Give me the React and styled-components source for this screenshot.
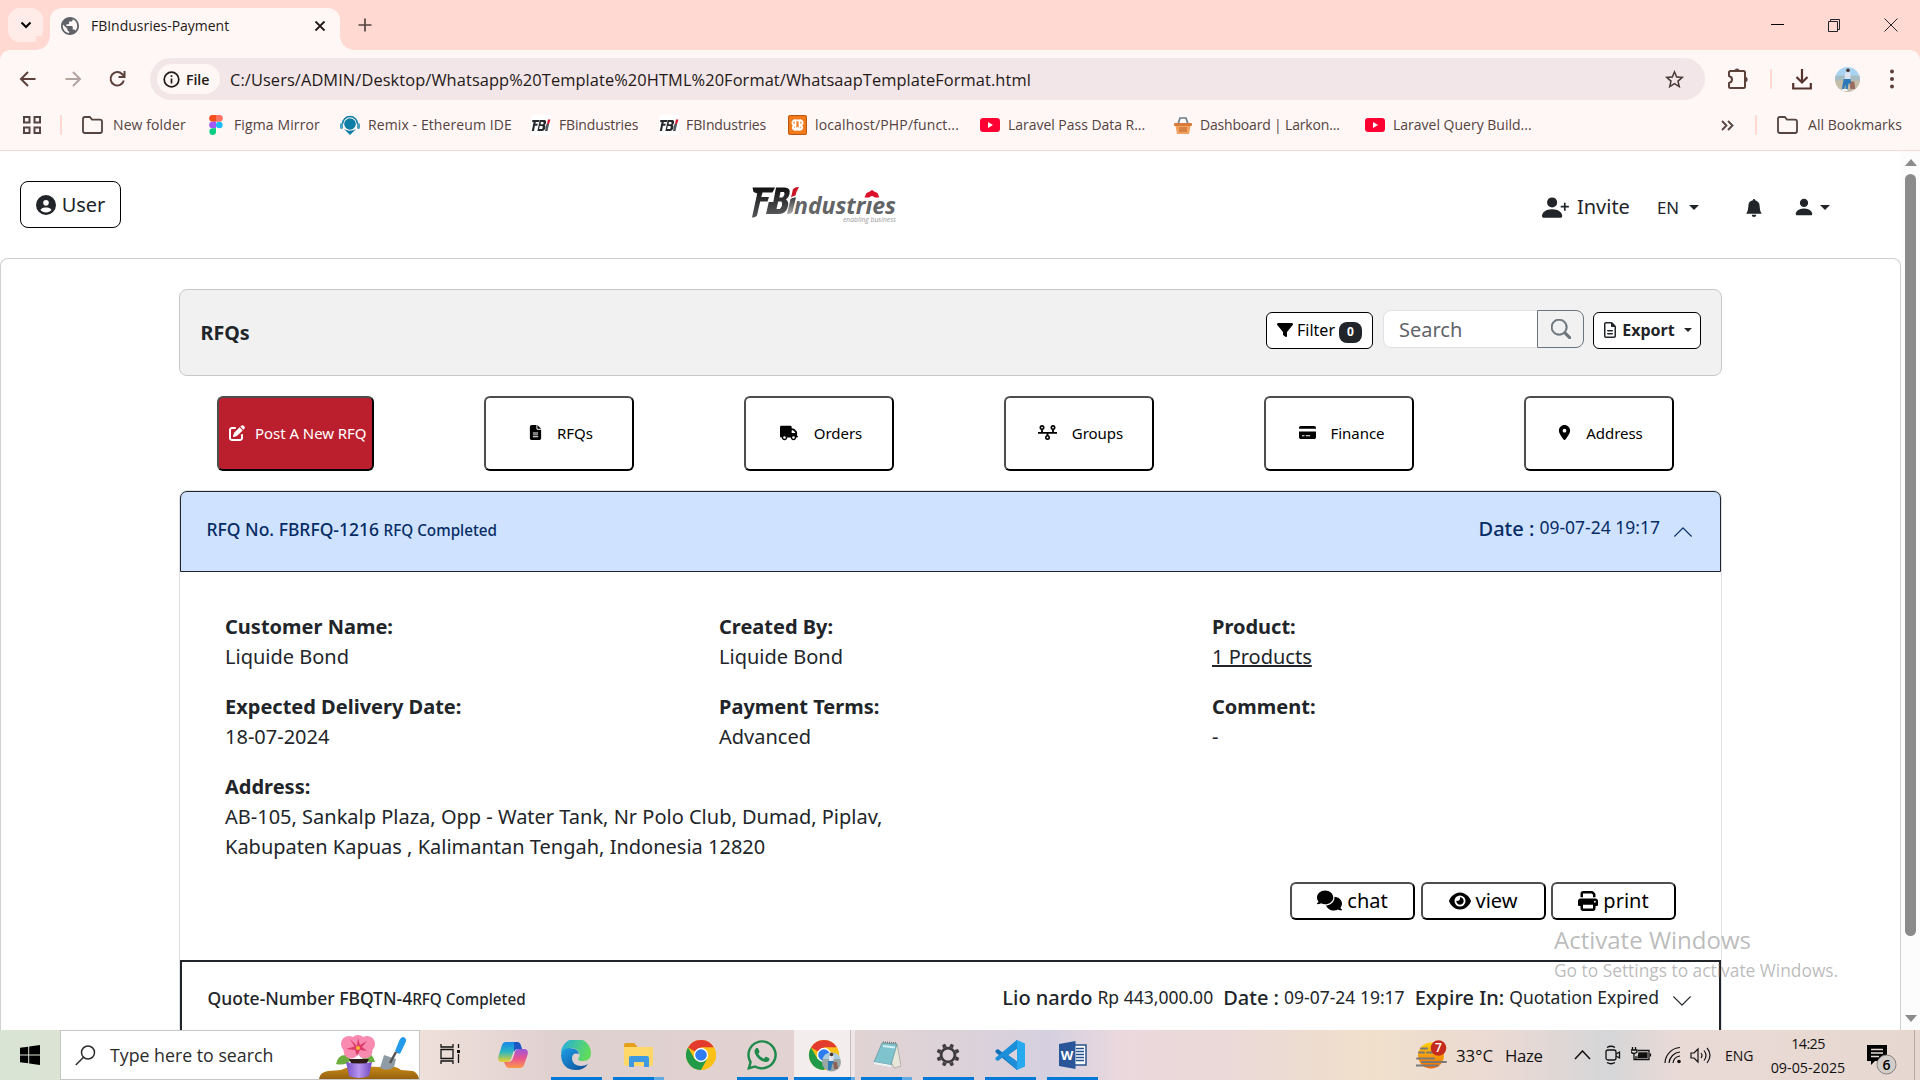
import React from "react";
import styled, { createGlobalStyle } from "styled-components";
import {
  FaCircleUser, FaPenToSquare, FaFileLines, FaTruck, FaCreditCard, FaLocationDot,
  FaFilter, FaComments, FaEye, FaPrint, FaRegFileLines, FaWhatsapp,
} from "react-icons/fa6";
import { BsPersonPlusFill, BsPersonFill, BsBellFill, BsSearch, BsChevronUp, BsChevronDown } from "react-icons/bs";
import { MdPublic, MdStarBorder } from "react-icons/md";

const GlobalStyle = createGlobalStyle`
  *, *::before, *::after { box-sizing: border-box; }
  html, body { margin: 0; padding: 0; overflow: hidden; }
  body { font-family: "Noto Sans", "Open Sans", sans-serif; color: #212529; background: #fff; }
  button, input { font-family: inherit; margin: 0; }
  svg { display: block; flex: none; }
`;

const Desktop = styled.div`
  width: 1920px;
  height: 1080px;
  display: flex;
  flex-direction: column;
  position: relative;
  overflow: hidden;
`;

/* ---------- browser chrome ---------- */
const Chrome = styled.header`
  font-family: "Open Sans", "Noto Sans", sans-serif;
  height: 151px;
  flex: none;
  background: #fff7f5;
  border-bottom: 1px solid #f5dbd7;
`;
const TabStrip = styled.div`
  height: 50px;
  background: #ffd9d2;
  display: flex;
  padding-left: 8px;
`;
const TabSearch = styled.button`
  width: 35px;
  height: 34px;
  margin: 8px 7px 0 0;
  padding: 0;
  border: 0;
  border-radius: 12px;
  background: #ffece8;
  display: flex;
  align-items: center;
  justify-content: center;
`;
const Tab = styled.div`
  position: relative;
  width: 290px;
  height: 42px;
  margin-top: 8px;
  padding: 0 10px 7px 11px;
  border-radius: 12px 12px 0 0;
  background: #fff7f5;
  display: flex;
  align-items: center;
  color: #241917;
  &::before, &::after {
    content: "";
    position: absolute;
    bottom: 0;
    width: 14px;
    height: 14px;
  }
  &::before { left: -14px; background: radial-gradient(circle at 0 0, #ffd9d2 13.5px, #fff7f5 14px); }
  &::after { right: -14px; background: radial-gradient(circle at 100% 0, #ffd9d2 13.5px, #fff7f5 14px); }
`;
const TabTitle = styled.span`
  flex: 1;
  margin-left: 12px;
  font-size: 14px;
  letter-spacing: -0.02px;
`;
const NewTab = styled.div`
  margin: 17px 0 0 18px;
  flex: 1;
`;
const WindowControls = styled.div`
  display: flex;
  align-items: center;
  height: 50px;
  gap: 42px;
  padding-right: 22px;
`;
const Toolbar = styled.div`
  height: 58px;
  background: #fff7f5;
  border-radius: 10px 10px 0 0;
  padding: 0 23px 0 18px;
  display: flex;
  align-items: center;
`;
const ToolbarWrap = styled.div`
  background: #ffd9d2;
`;
const NavButtons = styled.div`
  display: flex;
  gap: 25px;
  width: 132px;
`;
const Omnibox = styled.div`
  width: 1555px;
  height: 42px;
  margin-right: 22px;
  padding: 0 19px 0 7px;
  border-radius: 21px;
  background: #f2e6e8;
  display: flex;
  align-items: center;
`;
const FileChip = styled.div`
  height: 30px;
  width: 63px;
  border-radius: 15px;
  padding-left: 6px;
  background: #fff7f5;
  display: flex;
  align-items: center;
  gap: 6px;
  font-size: 14.2px;
  font-weight: 600;
  color: #241917;
  letter-spacing: -0.1px;
`;
const Url = styled.span`
  flex: 1;
  margin-left: 10px;
  font-size: 16.4px;
  letter-spacing: 0.09px;
  color: #241917;
`;
const Divider = styled.span`
  width: 2px;
  height: 20px;
  border-radius: 1px;
  background: #ffd9d2;
`;
const ToolbarActions = styled.div`
  flex: 1;
  display: flex;
  align-items: center;
`;
const ActionCell = styled.span`
  width: ${(p) => p.$w}px;
  flex: none;
`;
const Bookmarks = styled.nav`
  height: 34px;
  display: flex;
  align-items: center;
  color: #54433f;
`;
const Bookmark = styled.span`
  display: flex;
  align-items: center;
  gap: ${(p) => p.$gap ?? 9}px;
  width: ${(p) => p.$w}px;
  padding-left: ${(p) => p.$pl ?? 0}px;
  font-size: 14px;
  letter-spacing: ${(p) => p.$ls ?? 0}px;
  white-space: nowrap;
`;
const BookmarkLabel = styled.span`
  margin-bottom: 2px;
`;

/* ---------- web page ---------- */
const Viewport = styled.div`
  height: 879px;
  flex: none;
  display: flex;
  overflow: hidden;
`;
const Page = styled.div`
  width: 1901px;
  display: flex;
  flex-direction: column;
`;
const Scrollbar = styled.div`
  width: 19px;
  background: #fcfcfc;
  display: flex;
  flex-direction: column;
  align-items: center;
  padding: 8px 0 8px;
`;
const Thumb = styled.div`
  width: 11px;
  height: 762px;
  margin: 8px 0 auto;
  border-radius: 6px;
  background: #8b8b8b;
`;
const ScrollArrow = styled.div`
  width: 0;
  height: 0;
  border: 6.5px solid transparent;
  border-top-width: ${(p) => (p.$down ? 7 : 0)}px;
  border-bottom-width: ${(p) => (p.$down ? 0 : 7)}px;
  border-top-color: ${(p) => (p.$down ? "#8b8b8b" : "transparent")};
  border-bottom-color: ${(p) => (p.$down ? "transparent" : "#8b8b8b")};
`;
const SiteHeader = styled.header`
  height: 107px;
  flex: none;
  padding: 0 71px 0 20px;
  display: grid;
  grid-template-columns: 732px 1fr auto;
  align-items: start;
`;
const UserButton = styled.button`
  width: 101px;
  height: 47px;
  margin-top: 30px;
  padding: 0;
  border: 1px solid #000;
  border-radius: 8px;
  background: #fff;
  color: #212529;
  font-size: 20px;
  letter-spacing: -0.1px;
  display: flex;
  align-items: center;
  justify-content: center;
  gap: 6px;
`;
const Logo = styled.div`
  width: 150px;
  margin-top: 34px;
`;
const HeaderNav = styled.div`
  display: flex;
  align-items: center;
  height: 30px;
  margin-top: 41px;
  font-size: 20px;
`;
const Invite = styled.span`
  margin: -1px 27px 0 8px;
`;
const Lang = styled.span`
  font-size: 16.8px;
  margin-right: 10px;
`;
const Caret = styled.i`
  width: 0;
  height: 0;
  border: ${(p) => p.$size ?? 5}px solid transparent;
  border-top-color: currentColor;
  border-bottom: 0;
`;
const MainCard = styled.main`
  flex: 1;
  min-height: 0;
  border: 1px solid #d0d0d0;
  border-bottom: 0;
  border-radius: 8px 8px 0 0;
  padding: 30px 178px 0;
  display: flex;
  flex-direction: column;
`;
const TitleBar = styled.div`
  height: 87px;
  flex: none;
  border: 1px solid #c8c8c8;
  border-radius: 8px;
  background: #f1f1f1;
  padding: 20px 20px 0 20.5px;
  display: flex;
  justify-content: space-between;
  align-items: flex-start;
`;
const Title = styled.h1`
  margin: 8px 0 0;
  font-size: 19.7px;
  line-height: 30px;
  font-weight: 700;
`;
const Tools = styled.div`
  display: flex;
  align-items: flex-start;
`;
const ToolButton = styled.button`
  height: 37px;
  width: ${(p) => p.$w}px;
  margin-top: 2px;
  padding: 0 0 2px;
  border: 1px solid #000;
  border-radius: 6px;
  background: #fff;
  color: ${(p) => (p.$bold ? "#212529" : "#000")};
  font-size: 16px;
  font-weight: ${(p) => (p.$bold ? 700 : 400)};
  display: flex;
  align-items: center;
  justify-content: center;
  gap: 4px;
`;
const Badge = styled.span`
  width: 23px;
  height: 21px;
  margin-top: 5px;
  border-radius: 8px;
  background: #212529;
  color: #fff;
  font-size: 12px;
  line-height: 20px;
  font-weight: 700;
  text-align: center;
`;
const SearchGroup = styled.div`
  display: flex;
  margin: 0 9px 0 10px;
  height: 38px;
`;
const SearchInput = styled.input`
  width: 154px;
  height: 38px;
  padding: 0 15px;
  border: 1px solid #dee2e6;
  border-right: 0;
  border-radius: 8px 0 0 8px;
  font-size: 20px;
  outline: 0;
  &::placeholder { color: #5f6469; opacity: 1; }
`;
const SearchButton = styled.button`
  width: 47px;
  height: 38px;
  padding: 0;
  border: 1px solid #6c757d;
  border-radius: 0 8px 8px 0;
  background: #f1f1f1;
  color: #6c757d;
  display: flex;
  align-items: center;
  justify-content: center;
`;
const Steps = styled.nav`
  display: flex;
  gap: 110px;
  flex: none;
  margin: 20px 0 19px 38px;
`;
const outset = (w) => `
  border: ${w}px solid;
  border-color: #4d4d4d #000 #000 #4d4d4d;
`;
const Step = styled.button`
  width: ${(p) => (p.$primary ? 157 : 150)}px;
  height: 75px;
  flex: none;
  padding: 0 0 2px ${(p) => p.$pad ?? 0}px;
  ${outset(2)}
  border-radius: 6px;
  background: ${(p) => (p.$primary ? "#bb1f2e" : "#fff")};
  color: ${(p) => (p.$primary ? "#fff" : "#000")};
  font-size: 15px;
  letter-spacing: -0.05px;
  white-space: nowrap;
  display: flex;
  align-items: center;
  justify-content: ${(p) => (p.$primary ? "flex-start" : "center")};
  gap: ${(p) => p.$gap}px;
`;
const Accordion = styled.section`
  flex: 1;
  min-height: 0;
  border: 1px solid #dee2e6;
  border-bottom: 0;
  border-radius: 8px 8px 0 0;
  display: flex;
  flex-direction: column;
`;
const AccordionHeader = styled.div`
  height: 81px;
  flex: none;
  border: 1px solid #212529;
  border-radius: 7px 7px 0 0;
  background: #cfe2ff;
  color: #052c65;
  padding: 0 26px 5px 25.5px;
  display: flex;
  align-items: center;
  font-size: 17.5px;
`;
const QuoteHeader = styled.div`
  height: 90px;
  flex: none;
  border: 2px solid #212529;
  border-bottom: 0;
  padding: 21px 26px 0 25.5px;
  display: flex;
  align-items: flex-start;
  line-height: 30px;
  font-size: 17.5px;
`;
const HeadLeft = styled.span`
  flex: 1;
  font-weight: 500;
`;
const SmallState = styled.span`
  font-size: 15.25px;
`;
const Strong = styled.span`
  font-size: 20px;
  font-weight: 500;
  margin-top: ${(p) => p.$mt ?? 0}px;
`;
const Value = styled.span`
  margin: ${(p) => p.$mt ?? -3}px ${(p) => p.$mr ?? 0}px 0 5px;
`;
const AccordionBody = styled.div`
  height: 388px;
  flex: none;
  padding: 40px 45px 0;
`;
const Fields = styled.div`
  display: grid;
  grid-template-columns: 494px 493px 1fr;
  row-gap: 20px;
  font-size: 20px;
  line-height: 30px;
`;
const Field = styled.div`
  grid-column: ${(p) => (p.$wide ? "span 2" : "auto")};
  max-width: ${(p) => (p.$wide ? "700px" : "none")};
`;
const Label = styled.div`
  font-weight: 700;
`;
const ProductLink = styled.a`
  text-decoration: underline;
  color: inherit;
`;
const Actions = styled.div`
  display: flex;
  justify-content: flex-end;
  gap: 5.5px;
  margin-top: 20px;
`;
const ActionButton = styled.button`
  width: 125px;
  height: 38px;
  padding: 0 0 1px;
  ${outset(2)}
  border-radius: 6px;
  background: #fff;
  color: #000;
  font-size: 20px;
  display: flex;
  align-items: center;
  justify-content: center;
  gap: 5px;
`;
const Watermark = styled.div`
  position: absolute;
  left: 1554px;
  top: 923px;
  color: rgba(130, 130, 130, 0.55);
  font-family: "Open Sans", sans-serif;
  white-space: nowrap;
`;
const WatermarkTitle = styled.div`
  font-size: 24px;
  line-height: 34px;
`;
const WatermarkText = styled.div`
  font-size: 17.35px;
  line-height: 27px;
`;

/* ---------- taskbar ---------- */
const Taskbar = styled.footer`
  height: 50px;
  flex: none;
  display: flex;
  font-family: "Open Sans", "Noto Sans", sans-serif;
  color: #111;
  background: linear-gradient(90deg, #d8e4d4 0px, #dce4d4 60px, #efe0da 420px, #dfd0d0 560px, #e2d3d2 820px, #dcd2d8 960px, #d5d0e0 1050px, #ead8dd 1120px, #ead9d7 1230px, #f0e0cb 1370px, #e9d9d4 1510px, #d5d6d8 1610px, #eadad6 1680px, #e6d8d0 1920px);
`;
const StartButton = styled.div`
  width: 60px;
  display: flex;
  align-items: center;
  justify-content: center;
`;
const TaskSearch = styled.div`
  width: 360px;
  background: #fff;
  border: 1px solid #c6c6c6;
  display: flex;
  align-items: center;
  padding-left: 14px;
  font-size: 17.75px;
  color: #2b2b2b;
`;
const TaskSearchText = styled.span`
  flex: 1;
  margin-left: 14px;
`;
const Apps = styled.div`
  display: flex;
  flex: 1;
`;
const AppSlot = styled.div`
  width: ${(p) => p.$w ?? 62}px;
  height: 50px;
  display: flex;
  flex-direction: column;
  align-items: center;
`;
const AppFace = styled.div`
  height: 47px;
  width: ${(p) => (p.$active ? 61 : 51)}px;
  padding-top: ${(p) => (p.$flat ? 0 : 3)}px;
  display: flex;
  align-items: center;
  justify-content: center;
  background: ${(p) => (p.$active ? "linear-gradient(90deg, rgba(255,255,255,0.6) 56px, #c9bcbc 56px, #c9bcbc 57px, rgba(255,255,255,0.45) 57px)" : "transparent")};
`;
const Underline = styled.div`
  height: 3px;
  width: ${(p) => p.$w ?? 51}px;
  background: ${(p) => (p.$split ? `linear-gradient(90deg, #0078d7 ${p.$split}px, #62aae4 ${p.$split}px)` : "#0078d7")};
`;
const Weather = styled.div`
  display: flex;
  align-items: center;
  font-size: 16.8px;
  width: 158px;
`;
const Temp = styled.span`
  margin: 0 12px 0 9px;
`;
const Haze = styled.span`
  letter-spacing: -0.3px;
`;
const Tray = styled.div`
  display: flex;
  align-items: center;
  width: 180px;
  font-size: 14px;
  padding-left: 0;
`;
const TrayIcon = styled.span`
  width: ${(p) => p.$w}px;
`;
const Clock = styled.div`
  width: 108px;
  display: flex;
  flex-direction: column;
  align-items: center;
  padding-top: 2px;
  font-size: 14.3px;
  line-height: 23.5px;
`;
const ClockTime = styled.span`
  letter-spacing: -0.6px;
`;
const Notifications = styled.div`
  width: 53px;
  margin-right: 5px;
  padding: 13px 0 0 4px;
  border-right: 1px solid #b9aaa5;
`;

/* ---------- drawings ---------- */
const line = { fill: "none", stroke: "currentColor" };
const FolderIcon = () => (
  <svg width="21" height="18" viewBox="0 0 21 18" {...line} strokeWidth="1.8" color="#54433f">
    <path d="M1 3.2Q1 1 3 1h4.8l2.2 2.6H18q2 0 2 2V15q0 2-2 2H3q-2 0-2-2z" />
  </svg>
);
const FbMark = () => (
  <svg width="20" height="20" viewBox="0 0 20 20">
    <rect width="20" height="20" fill="#fff" />
    <g fill="#26282b"><path d="M1.500 5h7l-.7 2H4.800l-.4 1.800h2.400l-.6 2H3.900L3 16H.8L2.600 7H1z" />
      <path fillRule="evenodd" d="M8.700 5H14q1.800.8 1 3-.4 1.500-1.300 2 1.300 1 .6 3-.8 3-3.500 3H6.400zM10 7l-.5 2.200h2.500q1.300-1 .2-2.200zm-1.200 4-.7 3h3q1.200-1.500.2-3z" />
      <path d="M15.500 9H18l-1.500 7H14z" fill="#50545a" /></g>
    <path d="M17 4.500h2.500L18 9h-2z" fill="#d3172e" />
  </svg>
);
const FigmaIcon = () => (
  <svg width="14" height="20" viewBox="0 0 14 20">
    <path d="M7 0H3.500a3.300 3.300 0 0 0 0 6.700H7z" fill="#f24e1e" /><path d="M7 0h3.500a3.300 3.300 0 0 1 0 6.700H7z" fill="#ff7262" />
    <path d="M7 6.700H3.500a3.300 3.300 0 0 0 0 6.600H7z" fill="#a259ff" /><circle cx="10.300" cy="10" r="3.300" fill="#1abcfe" />
    <path d="M7 13.300H3.500A3.300 3.300 0 1 0 7 16.700z" fill="#0acf83" />
  </svg>
);
const RemixIcon = () => (
  <svg width="20" height="20" viewBox="0 0 20 20">
    <path d="M2.500 9a7.500 7.500 0 0 1 15 0" fill="none" stroke="#0f7ea6" strokeWidth="1.500" />
    <rect x="0" y="8" width="3" height="6" rx="1.500" fill="#4aa0be" /><rect x="17" y="8" width="3" height="6" rx="1.500" fill="#4aa0be" />
    <circle cx="10" cy="9" r="5.800" fill="#0f7ea6" /><path d="M4 14q6 3.500 12 0l-6 6z" fill="#0f7ea6" />
  </svg>
);
const XamppIcon = () => (
  <svg width="19" height="20" viewBox="0 0 19 20">
    <rect width="19" height="20" rx="2" fill="#f07a1c" /><rect x=".5" y=".5" width="18" height="19" rx="2" fill="none" stroke="#b8560f" />
    <path d="M7.500 10a2.400 2.400 0 1 1 0-4.600h4a2.400 2.400 0 1 1 0 4.600 2.400 2.400 0 1 1-2 3.500 2.400 2.400 0 1 1-2-3.500zM7.500 5.500v9M11.500 5.500v9" fill="none" stroke="#fff" strokeWidth="1.900" />
  </svg>
);
const YouTubeIcon = () => (
  <svg width="20" height="14" viewBox="0 0 20 14"><rect width="20" height="14" rx="3.300" fill="#f03" /><path d="M8 4l5 3-5 3z" fill="#fff" /></svg>
);
const BasketIcon = () => (
  <svg width="18" height="17" viewBox="0 0 18 17">
    <path d="M4 7l2-6h6l2 6" fill="none" stroke="#6b7f8a" strokeWidth="1.700" /><rect y="6" width="18" height="3" rx="1" fill="#d87a3c" />
    <path d="M1.500 9h15L15 17H3z" fill="#f3a15e" /><path d="M6 10v5m2-5v5m2-5v5m2-5v5" stroke="#b8622a" strokeWidth="1" />
  </svg>
);
const PuzzleIcon = () => (
  <svg width="22" height="22" viewBox="0 0 22 22" color="#5b403b">
    <path d="M2 4.500Q2 3 3.500 3h13Q18 3 18 4.500v14q0 1.500-1.500 1.500h-13Q2 20 2 18.500V15c4-1 4-6 0-7z" {...line} strokeWidth="2" strokeLinejoin="round" />
    <path d="M7.500 3a2.500 2.500 0 0 1 5 0zM18 8.800a2.600 2.600 0 0 1 0 5.200z" fill="currentColor" />
  </svg>
);
const Avatar = ({ size }) => (
  <svg width={size} height={size} viewBox="0 0 26 26">
    <defs><clipPath id={`av${size}`}><circle cx="13" cy="13" r="13" /></clipPath></defs>
    <g clipPath={`url(#av${size})`}>
      <rect width="26" height="13" fill="#a9d3f0" /><rect y="9" width="26" height="6" fill="#a8bcc4" /><rect y="14" width="26" height="12" fill="#c5bda8" />
      <path d="M15 15h5l1 8h-5z" fill="#9b6c64" /><path d="M10.500 6q3.500-2 5.500 0v7h-6z" fill="#dce4f4" />
      <circle cx="13.500" cy="3.500" r="1.900" fill="#4a3530" /><path d="M9 12.500h7l1 4-3 1-1 6.500h-2v-6l-2 6H7z" fill="#2c78b8" /><path d="M7 23h6v2H7z" fill="#f4f4f4" />
    </g>
  </svg>
);
const GroupsIcon = () => (
  <svg width="19" height="15" viewBox="0 0 19 15" {...line} strokeWidth="1.600">
    <circle cx="4" cy="2.600" r="1.700" /><circle cx="15" cy="2.600" r="1.700" />
    <path d="M4 4.500V7.500M15 4.500V7.500M0 7.800h19M9.500 8v3" strokeWidth="1.800" /><circle cx="9.500" cy="12.400" r="1.700" />
  </svg>
);
const LogoText = styled.text`
  font-family: "Open Sans", sans-serif;
  font-style: italic;
`;
const BrandLogo = () => (
  <svg width="150" height="46" viewBox="0 0 150 46">
    <defs>
      <linearGradient id="steel" x1="0" y1="0" x2="0" y2="1"><stop offset="0" stopColor="#111" /><stop offset="1" stopColor="#55575a" /></linearGradient>
      <linearGradient id="gray" x1="0" y1="0" x2="0" y2="1"><stop offset="0" stopColor="#3c3e40" /><stop offset="1" stopColor="#aaa" /></linearGradient>
    </defs>
    <path d="M.5 2.500h22.500l-2.500 5h-10l-1.200 4.500H17l-1.500 4.500H8.200L5 30.500q-2 2.500-5 2L5.200 8.500 1.500 7z" fill="url(#steel)" />
    <path fillRule="evenodd" d="M24 2.500h8.500q6.500 0 5 6.500-.8 4-3.500 5.500 3 2 2 6.500-1.800 8-9 8H14l2.800-12h4.500zm4.500 4.500-1.200 5.500h3q3.200-2.500 1.700-5.500zm-2.300 9.500-1.700 7.500h3.300q3.500-3.500 1.700-7.500z" fill="url(#steel)" />
    <path d="M38.500 14q2.500-2 5.500-1.500L40.500 27q-2 2.500-5.500 2z" fill="url(#gray)" />
    <path d="M41 4q3-2.500 6-2-3 5-3.500 8.500-2.500.3-4.500 2z" fill="#c91427" />
    <LogoText x="42" y="28.500" fontSize="24" fontWeight="700" fill="#626466" textLength="102" lengthAdjust="spacingAndGlyphs">ndustrıes</LogoText>
    <path d="M112.500 12.500l2-4.500 2.800-1.200L120 5l2.700 1.800L125.500 8l1.800 4.500-4.300 0q-3-3-6 0z" fill="#dd1029" />
    <LogoText x="91" y="36.500" fontSize="8" fill="#9a9a9a" textLength="53" lengthAdjust="spacingAndGlyphs">enabling business</LogoText>
  </svg>
);
const WindowsLogo = () => (
  <svg width="20" height="20" viewBox="0 0 20 20"><path d="M0 2.800 8.200 1.700v7.800H0zM9.200 1.500 20 0v9.500H9.200zM0 10.500h8.200v7.800L0 17.200zM9.200 10.500H20V20L9.200 18.500z" fill="#000" /></svg>
);
const FlowerArt = () => (
  <svg width="100" height="48" viewBox="0 0 100 48">
    <defs>
      <linearGradient id="pot"><stop offset="0" stopColor="#7551c8" /><stop offset=".5" stopColor="#b795f0" /><stop offset="1" stopColor="#7047bd" /></linearGradient>
      <linearGradient id="soil" x1="0" x2="0" y1="0" y2="1"><stop offset="0" stopColor="#c98b16" /><stop offset="1" stopColor="#96620f" /></linearGradient>
    </defs>
    <path d="M0 48q1-7 9-8l13-1q8-4 18-4l20 1q15-3 22 3l12 1q5 2 6 8z" fill="url(#soil)" />
    <path d="M17 33q2-10 11-9l4 5q-5 6-15 4zM56 31q-2-9-10-9l-3 5q4 5 13 4z" fill="#6cae3d" />
    <path d="M78 22l5-12" stroke="#777" strokeWidth="3" /><path d="M76 20l4.500-11q2-4 5-2.500 2.500 1.500 1 5L81 23z" fill="#249bea" />
    <path d="M65 24l12 4-2 8q-6 5-14 1z" fill="#8f9ba5" /><path d="M77 21l-6 11" stroke="#555" strokeWidth="2.500" />
    <path d="M30 28h20l-3 6H33z" fill="#2b1a17" /><path d="M27 31q13 3 26 0l-3 14q-10 4-20 0z" fill="url(#pot)" />
    <g fill="#f98ab0"><circle cx="30" cy="13" r="8" /><circle cx="39" cy="11.500" r="7.500" /><circle cx="48" cy="13" r="8" /><circle cx="46" cy="20" r="7.500" /><circle cx="32" cy="20" r="7.500" /></g>
    <path d="M38 15l-7-7 4.500 7.500L27 18l9 1 2 6 3-6 7 1-5-4 5-6-7 4-2-7z" fill="#dd3b68" /><circle cx="39" cy="17" r="2" fill="#f7b52c" />
  </svg>
);
const ChromeLogo = ({ avatar }) => (
  <svg width={avatar ? 34 : 30} height={avatar ? 34 : 30} viewBox={avatar ? "-1 -2 34 34" : "0 0 30 30"}>
    <circle cx="15" cy="15" r="15" fill="#fbc116" />
    <path d="M15 15 2 7.500A15 15 0 0 1 28 7.500H15z" fill="#e33b2e" />
    <path d="M2 7.500 8.500 18.700 15 22l6.500-3.200L15 30A15 15 0 0 1 2 7.500z" fill="#229a48" />
    <path d="M15 7.500h13A15 15 0 0 1 15 30l6.500-11.200z" fill="#fbc116" />
    <circle cx="15" cy="15" r="7.200" fill="#fff" /><circle cx="15" cy="15" r="5.800" fill="#2f7cf0" />
    {avatar && <g><circle cx="22.500" cy="22" r="9.500" fill="#9aa7a8" /><path d="M13.500 19a9.500 9.500 0 0 1 18 0z" fill="#a9cbe0" /><path d="M20 16q3-2 5 0l-1 6h-4z" fill="#e3e6ee" /><circle cx="22.500" cy="14.500" r="1.800" fill="#4a3530" /><path d="M19 21h6l-2 4-1 5h-3z" fill="#2c78b8" /><path d="M24 22h4l1 7h-4z" fill="#8f6259" /></g>}
  </svg>
);
const CopilotIcon = () => (
  <svg width="30" height="28" viewBox="0 0 30 28">
    <defs>
      <linearGradient id="cpA" x1="0" x2="0" y1="0" y2="1"><stop offset="0" stopColor="#1488ea" /><stop offset=".5" stopColor="#2fb6c0" /><stop offset="1" stopColor="#f2cf28" /></linearGradient>
      <linearGradient id="cpB" x1="0" x2="0" y1="0" y2="1"><stop offset="0" stopColor="#9b55dc" /><stop offset=".5" stopColor="#e9538f" /><stop offset="1" stopColor="#fd9a48" /></linearGradient>
    </defs>
    <path d="M8 1h11q3 0 4 4l1 3h-4q-4 0-5 4l-2 6q-1 3-4 3H4q-5 0-3.500-6L4 4q1-3 4-3z" fill="url(#cpA)" />
    <path d="M16 1h3q3 0 4 4l1 3h-4q-3 0-4 3z" fill="#1c57c4" />
    <path d="M22 27H11q-3 0-4-4l-1-2h4q4 0 5-4l2-6q1-3 4-3h5q5 0 3.500 6L26 24q-1 3-4 3z" fill="url(#cpB)" />
  </svg>
);
const EdgeIcon = () => (
  <svg width="30" height="30" viewBox="0 0 30 30">
    <defs><linearGradient id="edA" y2=".3"><stop offset="0" stopColor="#24a9e8" /><stop offset="1" stopColor="#5fdc5c" /></linearGradient>
      <linearGradient id="edB" x2="1" y2="1"><stop offset="0" stopColor="#1c9fe6" /><stop offset="1" stopColor="#0f4c96" /></linearGradient></defs>
    <path d="M0 14A15 15 0 0 1 30 13q0 8-8 8-5 0-5-2 2-2 1.500-5Q17 8 10 8 3 9 0 14z" fill="url(#edA)" />
    <path d="M0 15q1-6 8-7 9 0 10 6-7-2-7 5 1 7 9 7 4 0 7-2-4 6-12 6Q1 30 0 15z" fill="url(#edB)" />
  </svg>
);
const ExplorerIcon = () => (
  <svg width="29" height="24" viewBox="0 0 29 24">
    <path d="M0 2q0-2 2-2h8l3 3v4H0z" fill="#e2a01c" /><path d="M0 4h29v17q0 2-2 2H2q-2 0-2-2z" fill="#ffd869" />
    <path d="M5 24v-9q0-2 2-2h16q2 0 2 2v9h-5v-5H10v5z" fill="#3d9ae0" />
  </svg>
);
const NotepadIcon = () => (
  <svg width="28" height="28" viewBox="0 0 28 28">
    <path d="M9 2l15 1 4 22-7 2z" fill="#e9e7dc" stroke="#8f938c" strokeWidth=".6" /><path d="M9 2l15 1-6 21-17-3z" fill="#7fc3cf" stroke="#5e8f98" strokeWidth=".7" />
    <path d="M1 21l17 3v2L1 23z" fill="#eff6f6" /><path d="M10 5l12 1.500" stroke="#d4eff3" strokeWidth="2" /><path d="M10 1l14 1" stroke="#777" strokeWidth="1.500" strokeDasharray="1 1" />
  </svg>
);
const GearIcon = () => (
  <svg width="24" height="24" viewBox="-12 -12 24 24" color="#3f3c3e">
    <circle r="6.900" {...line} strokeWidth="2.800" />
    {[0, 45, 90, 135, 180, 225, 270, 315].map((a) => <path key={a} d="M-2-8l.4-3.500h3.200L2-8z" fill="currentColor" transform={`rotate(${a + 22.5})`} />)}
  </svg>
);
const CodeIcon = () => (
  <svg width="30" height="30" viewBox="0 0 30 30">
    <path d="M22 0 8 13 3 9 .5 10.300v1.900L22 30z" fill="#0b6fb8" /><path d="M22 8.500 13 15l9 6.500z" fill="#dcd2dc" />
    <path d="M22 30 8 17l-5 4-2.500-1.300v-2L22 0v8.500L13 15l9 6.500z" fill="#1c8fd8" /><path d="M22 0l8 3.500v23L22 30z" fill="#27a9f0" />
  </svg>
);
const WordGlyph = styled.text`
  font-family: "Open Sans", sans-serif;
`;
const WordIcon = () => (
  <svg width="28" height="28" viewBox="0 0 28 28">
    <rect x="13" y="4" width="14" height="20" fill="#fff" stroke="#27508f" strokeWidth="1.500" /><path d="M17 7.500h8m-8 3h8m-8 3h8m-8 3h8m-8 3h8" stroke="#27508f" strokeWidth="1.300" />
    <path d="M0 3 16.500 0v28L0 25z" fill="#2a5699" /><WordGlyph x="8" y="19" fontSize="13" fontWeight="700" fill="#fff" textAnchor="middle">W</WordGlyph>
  </svg>
);
const HazeIcon = () => (
  <svg width="31" height="30" viewBox="0 0 31 30">
    <defs><linearGradient id="hz" x1="0" x2="0" y1="0" y2="1"><stop offset="0" stopColor="#fdcf0c" /><stop offset="1" stopColor="#ef6a09" /></linearGradient></defs>
    <circle cx="15" cy="15.500" r="13" fill="url(#hz)" />
    <path d="M5 8.500h6M11 12.500h15M3 12.500h5M1 18.500h17M6 22h24M0 25.500h22" stroke="#7b7878" strokeWidth="2" strokeLinecap="round" />
    <circle cx="22.500" cy="8" r="7.800" fill="#c52b1f" /><WordGlyph x="22.500" y="12.300" fontSize="12" fontWeight="600" fill="#fff" textAnchor="middle">7</WordGlyph>
  </svg>
);
const NotificationIcon = () => (
  <svg width="34" height="34" viewBox="0 0 34 34">
    <path d="M1 2h20v16H9l-4 4v-4H1z" fill="#000" /><path d="M5 6.500h12M5 10h12M5 13.500h8" stroke="#e9dcd6" strokeWidth="1.300" />
    <circle cx="20.500" cy="21.500" r="9.500" fill="#d3cdca" stroke="#85807e" /><WordGlyph x="20.500" y="26.500" fontSize="14" fontWeight="600" textAnchor="middle">6</WordGlyph>
  </svg>
);

const steps = [
  { label: "Post A New RFQ", Icon: FaPenToSquare, size: 16, gap: 10, primary: true, pad: 10 },
  { label: "RFQs", Icon: FaFileLines, size: 15, gap: 14, pad: 3 },
  { label: "Orders", Icon: FaTruck, size: 18, gap: 16, pad: 4 },
  { label: "Groups", Icon: GroupsIcon, size: 19, gap: 15, pad: 3 },
  { label: "Finance", Icon: FaCreditCard, size: 17, gap: 15, pad: 5 },
  { label: "Address", Icon: FaLocationDot, size: 15, gap: 14, pad: 2 },
];
const fields = [
  { label: "Customer Name:", value: "Liquide Bond" },
  { label: "Created By:", value: "Liquide Bond" },
  { label: "Product:", value: "1 Products", link: true },
  { label: "Expected Delivery Date:", value: "18-07-2024" },
  { label: "Payment Terms:", value: "Advanced" },
  { label: "Comment:", value: "-" },
  { label: "Address:", value: "AB-105, Sankalp Plaza, Opp - Water Tank, Nr Polo Club, Dumad, Piplav, Kabupaten Kapuas , Kalimantan Tengah, Indonesia 12820", wide: true },
];
const actions = [
  { label: "chat", Icon: FaComments, size: 25 },
  { label: "view", Icon: FaEye, size: 22 },
  { label: "print", Icon: FaPrint, size: 20 },
];
const bookmarks = [
  { label: "New folder", Icon: FolderIcon, w: 127, gap: 10, ls: 0.1, pl: 20 },
  { label: "Figma Mirror", Icon: FigmaIcon, w: 151, gap: 11, ls: 0.12, pl: 20 },
  { label: "Remix - Ethereum IDE", Icon: RemixIcon, w: 191, gap: 8, ls: 0.1 },
  { label: "FBindustries", Icon: FbMark, w: 128, gap: 8, ls: -0.15 },
  { label: "FBIndustries", Icon: FbMark, w: 129, gap: 7, ls: -0.1 },
  { label: "localhost/PHP/funct...", Icon: XamppIcon, w: 192, gap: 8, ls: 0.15 },
  { label: "Laravel Pass Data R...", Icon: YouTubeIcon, w: 194, gap: 8, ls: -0.03 },
  { label: "Dashboard | Larkon...", Icon: BasketIcon, w: 191, gap: 8, ls: -0.18 },
  { label: "Laravel Query Build...", Icon: YouTubeIcon, w: 356, gap: 8, ls: 0 },
];

const BrowserChrome = () => (
  <Chrome>
    <TabStrip>
      <TabSearch><svg width="12" height="8" viewBox="0 0 12 8" {...line} strokeWidth="2"><path d="M1.500 1.500 6 6l4.500-4.500" /></svg></TabSearch>
      <Tab>
        <svg width="18" height="18" viewBox="2 2 20 20"><MdPublic size={24} color="#5f6368" /></svg>
        <TabTitle>FBIndusries-Payment</TabTitle>
        <svg width="20" height="12" viewBox="0 0 20 12" {...line} strokeWidth="1.800"><path d="M5.500 1.500l9 9M14.500 1.500l-9 9" /></svg>
      </Tab>
      <NewTab><svg width="14" height="16" viewBox="0 0 14 16" {...line} strokeWidth="1.700" color="#54433f"><path d="M7 1.500v13M.5 8h13" /></svg></NewTab>
      <WindowControls>
        <svg width="14" height="14" viewBox="0 0 14 14"><path d="M0 6.500h13" stroke="#000" /></svg>
        <svg width="15" height="15" viewBox="0 0 15 15" {...line}><path d="M1.500 3.500h9v10h-9zM3.500 3.500v-2h9v10h-2" /></svg>
        <svg width="14" height="14" viewBox="0 0 14 14" {...line}><path d="M.5.500l13 13M13.500.5l-13 13" /></svg>
      </WindowControls>
    </TabStrip>
    <ToolbarWrap>
      <Toolbar>
        <NavButtons>
          <svg width="20" height="20" viewBox="0 0 20 20" {...line} strokeWidth="2" color="#5b403b"><path d="M17.500 10H3.500M10 3l-7 7 7 7" /></svg>
          <svg width="20" height="20" viewBox="0 0 20 20" {...line} strokeWidth="2" color="#b3a4a1"><path d="M2.500 10h14M10 3l7 7-7 7" /></svg>
          <svg width="20" height="20" viewBox="0 0 20 20" {...line} strokeWidth="2" color="#5b403b"><path d="M15.800 11.500A6.700 6.700 0 1 1 14.200 5.200L16 7.200M16.500 2v6h-6" /></svg>
        </NavButtons>
        <Omnibox>
          <FileChip>
            <svg width="17" height="17" viewBox="0 0 17 17" {...line} strokeWidth="1.700"><circle cx="8.500" cy="8.500" r="7.300" /><path d="M8.500 7.500v5M8.500 4.300v1.800" /></svg>
            File
          </FileChip>
          <Url>C:/Users/ADMIN/Desktop/Whatsapp%20Template%20HTML%20Format/WhatsaapTemplateFormat.html</Url>
          <MdStarBorder size={23} color="#4a3b38" />
        </Omnibox>
        <ToolbarActions>
          <ActionCell $w={43}><PuzzleIcon /></ActionCell>
          <Divider />
          <ActionCell $w={20} />
          <ActionCell $w={43}><svg width="20" height="21" viewBox="0 0 20 21" {...line} strokeWidth="2.200" color="#54332e"><path d="M10 0v13M4.500 8l5.500 5.500L15.500 8M1.200 14v5.500h17.600V14" /></svg></ActionCell>
          <ActionCell $w={52}><Avatar size={25} /></ActionCell>
          <svg width="10" height="20" viewBox="0 0 10 20" fill="#5b403b"><circle cx="5" cy="2.500" r="2" /><circle cx="5" cy="10" r="2" /><circle cx="5" cy="17.500" r="2" /></svg>
        </ToolbarActions>
      </Toolbar>
    </ToolbarWrap>
    <Bookmarks>
      <Bookmark $w={60} $pl={23}><svg width="18" height="18" viewBox="0 0 18 18" {...line} strokeWidth="2"><path d="M1 1h5.500v5.500H1zM11.500 1H17v5.500h-5.500zM1 11.500h5.500V17H1zM11.500 11.500H17V17h-5.500z" /></svg></Bookmark>
      <Divider />
      {bookmarks.map(({ label, Icon, w, gap, ls, pl }) => (
        <Bookmark key={label} $w={w} $gap={gap} $ls={ls} $pl={pl}><Icon /><BookmarkLabel>{label}</BookmarkLabel></Bookmark>
      ))}
      <Bookmark $w={34}><svg width="13" height="11" viewBox="0 0 13 11" {...line} strokeWidth="1.800"><path d="M1 1l4.500 4.500L1 10M7 1l4.500 4.500L7 10" /></svg></Bookmark>
      <Divider />
      <Bookmark $w={146} $gap={10} $ls={0.05} $pl={20}><FolderIcon /><BookmarkLabel>All Bookmarks</BookmarkLabel></Bookmark>
    </Bookmarks>
  </Chrome>
);

const NavIcon = styled.span`
  margin: ${(p) => p.$m ?? "0"};
`;
const BoldSearch = styled(BsSearch)`
  stroke: currentColor;
  stroke-width: 0.6;
`;
const ExportCaret = styled(Caret)`
  margin-left: 5px;
`;

const WebPage = () => (
  <Viewport>
    <Page>
      <SiteHeader>
        <UserButton><FaCircleUser size={20} />User</UserButton>
        <Logo><BrandLogo /></Logo>
        <HeaderNav>
          <BsPersonPlusFill size={27} />
          <Invite>Invite</Invite>
          <Lang>EN</Lang>
          <Caret />
          <NavIcon $m="1px 30px 0 46px"><BsBellFill size={18} /></NavIcon>
          <NavIcon $m="0 5px 0 0"><BsPersonFill size={22} /></NavIcon>
          <Caret />
        </HeaderNav>
      </SiteHeader>
      <MainCard>
        <TitleBar>
          <Title>RFQs</Title>
          <Tools>
            <ToolButton $w={107}><FaFilter size={16} />Filter <Badge>0</Badge></ToolButton>
            <SearchGroup>
              <SearchInput placeholder="Search" />
              <SearchButton><BoldSearch size={20} /></SearchButton>
            </SearchGroup>
            <ToolButton $w={108} $bold><FaRegFileLines size={16} />Export<ExportCaret $size={4} /></ToolButton>
          </Tools>
        </TitleBar>
        <Steps>
          {steps.map(({ label, Icon, size, gap, primary, pad }) => (
            <Step key={label} $primary={primary} $gap={gap} $pad={pad}><Icon size={size} />{label}</Step>
          ))}
        </Steps>
        <Accordion>
          <AccordionHeader>
            <HeadLeft>RFQ No. FBRFQ-1216 <SmallState>RFQ Completed</SmallState></HeadLeft>
            <Strong $mt={-1}>Date :</Strong>
            <Value $mr={12} $mt={-4}>09-07-24 19:17</Value>
            <NavIcon $m="5px 0 0"><BsChevronUp size={22} /></NavIcon>
          </AccordionHeader>
          <AccordionBody>
            <Fields>
              {fields.map(({ label, value, link, wide }) => (
                <Field key={label} $wide={wide}>
                  <Label>{label}</Label>
                  {link ? <ProductLink>{value}</ProductLink> : value}
                </Field>
              ))}
            </Fields>
            <Actions>
              {actions.map(({ label, Icon, size }) => (
                <ActionButton key={label}><Icon size={size} />{label}</ActionButton>
              ))}
            </Actions>
          </AccordionBody>
          <QuoteHeader>
            <HeadLeft>Quote-Number FBQTN-4<SmallState>RFQ Completed</SmallState></HeadLeft>
            <Strong>Lio nardo</Strong><Value $mr={10} $mt={-1}>Rp 443,000.00</Value>
            <Strong>Date :</Strong><Value $mr={10} $mt={-1}>09-07-24 19:17</Value>
            <Strong>Expire In:</Strong><Value $mr={12} $mt={-1}>Quotation Expired</Value>
            <NavIcon $m="7px 0 0"><BsChevronDown size={22} /></NavIcon>
          </QuoteHeader>
        </Accordion>
      </MainCard>
    </Page>
    <Scrollbar><ScrollArrow /><Thumb /><ScrollArrow $down /></Scrollbar>
  </Viewport>
);

const TaskbarView = () => (
  <Taskbar>
    <StartButton><WindowsLogo /></StartButton>
    <TaskSearch>
      <svg width="21" height="21" viewBox="0 0 21 21" {...line} strokeWidth="1.500"><circle cx="13" cy="7.500" r="6.500" /><path d="M8.500 12.200.800 20" /></svg>
      <TaskSearchText>Type here to search</TaskSearchText>
      <FlowerArt />
    </TaskSearch>
    <Apps>
      <AppSlot $w={61}><AppFace $flat><svg width="21" height="20" viewBox="0 0 21 20" {...line} strokeWidth="1.300"><path d="M1 0v3h12V0M1 20v-3h12v3M1 5.500h12v9H1zM18.500 0v4M18.500 10v9" /><path d="M17 6h3v3h-3z" fill="currentColor" stroke="none" /></svg></AppFace></AppSlot>
      <AppSlot $w={64}><AppFace><CopilotIcon /></AppFace></AppSlot>
      <AppSlot $w={62}><AppFace><EdgeIcon /></AppFace><Underline /></AppSlot>
      <AppSlot $w={63}><AppFace><ExplorerIcon /></AppFace><Underline $split={41} /></AppSlot>
      <AppSlot $w={61}><AppFace><ChromeLogo /></AppFace></AppSlot>
      <AppSlot $w={62}><AppFace><FaWhatsapp size={34} color="#1f8a4c" /></AppFace><Underline /></AppSlot>
      <AppSlot $w={63}><AppFace $active><ChromeLogo avatar /></AppFace><Underline $w={61} $split={57} /></AppSlot>
      <AppSlot $w={61}><AppFace><NotepadIcon /></AppFace><Underline $split={41} /></AppSlot>
      <AppSlot $w={62}><AppFace><GearIcon /></AppFace><Underline /></AppSlot>
      <AppSlot $w={62}><AppFace><CodeIcon /></AppFace><Underline /></AppSlot>
      <AppSlot $w={63}><AppFace><WordIcon /></AppFace><Underline /></AppSlot>
    </Apps>
    <Weather><HazeIcon /><Temp>33°C</Temp><Haze>Haze</Haze></Weather>
    <Tray>
      <TrayIcon $w={31}><svg width="17" height="10" viewBox="0 0 17 10" {...line} strokeWidth="1.500"><path d="M1 9l7.500-8L16 9" /></svg></TrayIcon>
      <TrayIcon $w={26}><svg width="16" height="20" viewBox="0 0 16 20" {...line} strokeWidth="1.300"><rect x="1" y="5" width="10" height="10" rx="2" /><path d="M11 9l3.500-2v6L11 11M2 2.500q4-2.500 8 0M2 17.500q4 2.500 8 0" /></svg></TrayIcon>
      <TrayIcon $w={33}><svg width="21" height="16" viewBox="0 0 21 16" {...line} strokeWidth="1.300"><path d="M7 3.500h11v9H5V9M19.500 6.500v3M1.500 0v3M4.500 0v3M0 3h6v2q-3 3-6 0zM3 6v6.500h2" /><path d="M8 6h8v4.500H7z" fill="currentColor" /></svg></TrayIcon>
      <TrayIcon $w={26}><svg width="18" height="18" viewBox="0 0 18 18" {...line} strokeWidth="1.200"><path d="M1 17A16 16 0 0 1 16 1.500M5 17A12 12 0 0 1 16 6M9 17a8 8 0 0 1 7-7" /><circle cx="15" cy="15.500" r="1.800" fill="currentColor" stroke="none" /></svg></TrayIcon>
      <TrayIcon $w={35}><svg width="22" height="17" viewBox="0 0 22 17" {...line} strokeWidth="1.200"><path d="M1 6h3l4-4v13l-4-4H1zM11 6q2 2.500 0 5M14 3.500q4 5 0 10M17 1q6 7 0 15" /></svg></TrayIcon>
      ENG
    </Tray>
    <Clock><ClockTime>14:25</ClockTime><span>09-05-2025</span></Clock>
    <Notifications><NotificationIcon /></Notifications>
  </Taskbar>
);

export default function App() {
  return (
    <Desktop>
      <GlobalStyle />
      <BrowserChrome />
      <WebPage />
      <Watermark>
        <WatermarkTitle>Activate Windows</WatermarkTitle>
        <WatermarkText>Go to Settings to activate Windows.</WatermarkText>
      </Watermark>
      <TaskbarView />
    </Desktop>
  );
}
